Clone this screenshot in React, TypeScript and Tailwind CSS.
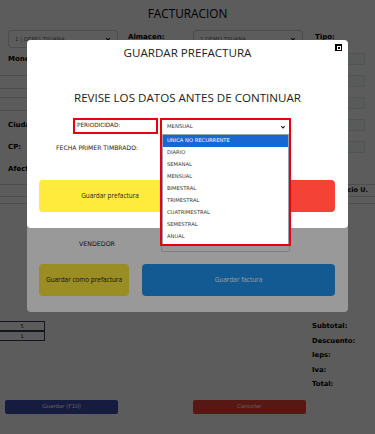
import React from "react";

const periodos = [
  "UNICA NO RECURRENTE",
  "DIARIO",
  "SEMANAL",
  "MENSUAL",
  "BIMESTRAL",
  "TRIMESTRAL",
  "CUATRIMESTRAL",
  "SEMESTRAL",
  "ANUAL",
  "OTRO",
];

const formRows = [
  { label: "Moneda:", left: false },
  { label: "", left: true },
  { label: "", left: true },
  { label: "Ciudad:", left: false },
  { label: "CP:", left: false },
  { label: "Afectación:", left: false, noBox: true },
];

function Chevron() {
  return (
    <svg width="6" height="6" viewBox="0 0 10 10" fill="none">
      <path d="M2 3.5 L5 6.5 L8 3.5" stroke="#222" strokeWidth="1.8" />
    </svg>
  );
}

function Fondo() {
  return (
    <div className="flex h-full flex-col">
      <h1 className="pt-[4px] text-center font-['Open_Sans',sans-serif] text-[11.8px] leading-[19px] text-black">
        FACTURACION
      </h1>
      <div className="mt-[7px] flex items-start">
        <div className="ml-[8px] flex h-[18px] w-[110px] items-center justify-between rounded-[3px] border border-gray-300 px-[6px] text-[5.5px] text-gray-500">
          <span>1 | DEMO TIJUANA</span>
          <Chevron />
        </div>
        <div className="ml-[10px] mt-[2px] w-[65px] text-[7px] font-bold text-black">Almacen:</div>
        <div className="flex h-[18px] w-[110px] items-center justify-between rounded-[3px] border border-gray-300 px-[6px] text-[5.5px] text-gray-500">
          <span>1 DEMO TIJUANA</span>
          <Chevron />
        </div>
        <div className="ml-[12px] mt-[2px] text-[7px] font-bold text-black">Tipo:</div>
      </div>
      <div className="mt-[4px]">
        {formRows.map((r, i) => (
          <div key={i} className="flex h-[22px] items-start pt-[1px]">
            {r.left ? (
              <div className="-ml-px h-[14px] w-[60px] border border-gray-300 bg-white" />
            ) : (
              <div className="ml-[8px] flex h-[12px] w-[60px] items-center text-[7px] font-bold text-black">
                {r.label}
              </div>
            )}
            {!r.noBox && (
              <div className="ml-auto mr-[10px] h-[12px] w-[60px] rounded-[2px] border border-gray-200 bg-gray-50" />
            )}
          </div>
        ))}
      </div>
      <div className="flex h-[13px] items-center justify-end border-y border-gray-300 pr-[7px] text-[6.5px] font-bold text-black">
        Precio U.
      </div>
      <div className="h-[7px] border-b border-gray-300" />
      <div className="h-[115px]" />
      <div className="flex">
        <div className="mt-[2px] flex flex-col">
          <div className="-ml-px h-[10px] w-[46px] border border-gray-700 text-center text-[5px] leading-[8px]">5</div>
          <div className="-ml-px h-[10px] w-[46px] border border-gray-700 text-center text-[5px] leading-[8px]">1</div>
        </div>
        <div className="ml-auto mr-[12px] w-[51px] text-[6.8px] font-semibold leading-[14.5px] text-black">
          <div>Subtotal:</div>
          <div>Descuento:</div>
          <div>Ieps:</div>
          <div>Iva:</div>
          <div>Total:</div>
        </div>
      </div>
      <div className="mt-[8px] flex">
        <div className="ml-[5px] flex h-[14px] w-[113px] items-center justify-center rounded-[2px] bg-[#3f51b5] text-[5.5px] text-white">
          Guardar (F10)
        </div>
        <div className="ml-[75px] flex h-[14px] w-[113px] items-center justify-center rounded-[2px] bg-[#f44336] text-[5.5px] text-white">
          Cancelar
        </div>
      </div>
    </div>
  );
}

function ModalFacturar() {
  return (
    <div className="absolute left-[27px] top-[40px] flex h-[272px] w-[321px] flex-col justify-end rounded-[4px] bg-white pb-[16px] font-['Open_Sans',sans-serif] text-[#222]">
      <div className="flex h-[16px] items-center">
        <div className="ml-[28px] w-[84px] text-center font-['DejaVu_Sans',sans-serif] text-[6.3px]">VENDEDOR</div>
        <div className="ml-[22px] h-[16px] w-[129px] rounded-[2px] border border-gray-300" />
      </div>
      <div className="mt-[12px] flex">
        <div className="ml-[12px] flex h-[32px] w-[90px] items-center justify-center whitespace-nowrap rounded-[4px] bg-[#ffeb3b] text-[6.4px]">
          Guardar como prefactura
        </div>
        <div className="ml-[13px] flex h-[32px] w-[193px] items-center justify-center rounded-[4px] bg-[#2196f3] text-[6.4px] text-white">
          Guardar factura
        </div>
      </div>
    </div>
  );
}

function ModalPrefactura() {
  return (
    <div className="absolute left-[27px] top-[40px] h-[188px] w-[321px] rounded-[4px] bg-white font-['Open_Sans',sans-serif] text-[#222]">
      <div className="absolute right-[6px] top-[4px] flex h-[7px] w-[7px] items-center justify-center bg-black">
        <div className="h-[4px] w-[4px] border border-white" />
      </div>
      <h2 className="pt-[4px] text-center text-[11.6px] leading-[18px]">GUARDAR PREFACTURA</h2>
      <h3 className="mt-[26px] text-center text-[11.6px] leading-[20px]">REVISE LOS DATOS ANTES DE CONTINUAR</h3>
      <div className="mt-[10px] flex font-['DejaVu_Sans',sans-serif]">
        <div className="ml-[46px] h-[16px] w-[85px] border-2 border-red-600 pl-[2px] text-[5.7px] leading-[10px]">
          PERIODICIDAD:
        </div>
        <div className="relative ml-[2px] h-[16px] w-[131px]">
          <div className="absolute left-0 top-0 z-10 h-[128px] w-[131px] overflow-hidden border-2 border-red-600 bg-white">
            <div className="flex h-[14px] items-center justify-between pl-[5px] pr-[3px] text-[5.3px] text-[#333]">
              <span>MENSUAL</span>
              <Chevron />
            </div>
            <div className="h-[112px] border border-gray-400">
              {periodos.map((p, i) => (
                <div
                  key={p}
                  className={
                    "flex h-[12px] items-center pl-[4px] text-[5.2px] " +
                    (i === 0 ? "bg-[#1967d2] text-white" : "text-[#333]")
                  }
                >
                  {p}
                </div>
              ))}
            </div>
          </div>
        </div>
      </div>
      <div className="mt-[9px] flex h-[10px] items-center font-['DejaVu_Sans',sans-serif]">
        <div className="ml-[26px] w-[88px] text-center text-[6.1px]">FECHA PRIMER TIMBRADO:</div>
      </div>
      <div className="mt-[27px] flex">
        <div className="ml-[12px] flex h-[32px] w-[142px] items-center justify-center rounded-[4px] bg-[#ffeb3b] text-[6.4px]">
          Guardar prefactura
        </div>
        <div className="ml-[9px] flex h-[32px] w-[145px] items-center justify-center rounded-[4px] bg-[#f44336] text-[6.4px] text-white">
          Cancelar
        </div>
      </div>
    </div>
  );
}

export default function App() {
  return (
    <div className="relative h-[434px] w-[375px] overflow-hidden bg-white font-['DejaVu_Sans',sans-serif]">
      <Fondo />
      <div className="absolute inset-0 bg-black/40" />
      <ModalFacturar />
      <div className="absolute inset-0 bg-black/40" />
      <ModalPrefactura />
    </div>
  );
}
